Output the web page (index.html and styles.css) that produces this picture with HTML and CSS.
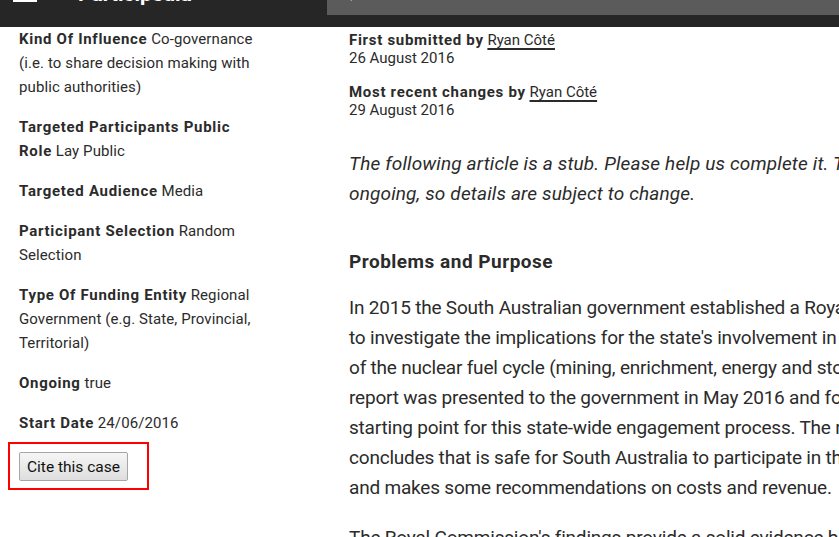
FILE: index.html
```html
<!DOCTYPE html>
<html lang="en">
<head>
<meta charset="utf-8">
<title>Participedia</title>
<link rel="stylesheet" href="styles.css">
</head>
<body>
<header class="topbar">
  <svg class="burger" width="24" height="20" viewBox="0 0 24 20"><rect x="0" y="0" width="24" height="2" fill="#fff"/><rect x="0" y="8" width="24" height="2" fill="#fff"/><rect x="0" y="16" width="24" height="2" fill="#fff"/></svg>
  <span class="brand">Participedia</span>
  <div class="search">
    <svg class="search-icon" width="16" height="16" viewBox="0 0 16 16"><circle cx="6.5" cy="6.5" r="5" fill="none" stroke="#fff" stroke-width="2"/><line x1="10.2" y1="10.2" x2="14" y2="14" stroke="#fff" stroke-width="2.2"/></svg>
  </div>
</header>
<main class="page">
  <aside class="facts">
    <p class="fact"><b>Kind Of Influence</b> Co-governance<br>(i.e. to share decision making with<br>public authorities)</p>
    <p class="fact"><b>Targeted Participants Public<br>Role</b> Lay Public</p>
    <p class="fact"><b>Targeted Audience</b> Media</p>
    <p class="fact"><b>Participant Selection</b> Random<br>Selection</p>
    <p class="fact"><b>Type Of Funding Entity</b> Regional<br>Government (e.g. State, Provincial,<br>Territorial)</p>
    <p class="fact"><b>Ongoing</b> true</p>
    <p class="fact"><b>Start Date</b> 24/06/2016</p>
    <div class="cite-box"><button class="cite-btn" type="button">Cite this case</button></div>
  </aside>
  <article class="article">
    <div class="meta">
      <p><b>First submitted by</b> <a href="#">Ryan Côté</a><br>26 August 2016</p>
      <p><b>Most recent changes by</b> <a href="#">Ryan Côté</a><br>29 August 2016</p>
    </div>
    <p class="stub">The following article is a stub. Please help us complete it. This process is<br>ongoing, so details are subject to change.</p>
    <h2 class="section-title">Problems and Purpose</h2>
    <p class="body">In 2015 the South Australian government established a Royal Commission<br>to investigate the implications for the state's involvement in four areas<br>of the nuclear fuel cycle (mining, enrichment, energy and storage). The final<br>report was presented to the government in May 2016 and forms the<br>starting point for this state-wide engagement process. The report<br>concludes that is safe for South Australia to participate in the storage<br>and makes some recommendations on costs and revenue.</p>
    <p class="body">The Royal Commission's findings provide a solid evidence base for the</p>
  </article>
</main>
</body>
</html>
```

FILE: styles.css
```css
html, body {
  margin: 0;
  padding: 0;
  background: #fff;
  overflow: hidden;
}
body {
  font-family: Roboto, "Liberation Sans", sans-serif;
  color: #2b2b2b;
  width: 839px;
  height: 537px;
}
.topbar {
  height: 27px;
  background: #262626;
  display: flex;
  align-items: flex-start;
  overflow: hidden;
}
.burger {
  margin: -16px 0 0 13px;
  flex: none;
}
.brand {
  margin: -16px 0 0 41px;
  font-size: 21px;
  line-height: 21px;
  font-weight: 700;
  color: #fff;
  flex: none;
}
.search {
  margin-left: auto;
  width: 512px;
  height: 15px;
  background: #5b5b5b;
  position: relative;
  flex: none;
}
.search-icon {
  position: absolute;
  left: 11px;
  top: -14px;
}
.page {
  display: flex;
  align-items: flex-start;
  padding-left: 19px;
}
.facts {
  width: 262px;
  flex: none;
  font-size: 15px;
  line-height: 24px;
  letter-spacing: 0.1px;
}
.fact {
  margin: 0 0 16px;
  white-space: nowrap;
}
.fact b {
  font-weight: 700;
  letter-spacing: 0.7px;
}
.cite-box {
  display: inline-block;
  margin: -9px 0 0 -11px;
  padding: 8px 19px 7px 9px;
  border: 2px solid #ff0000;
}
.cite-btn {
  display: block;
  width: 109px;
  height: 29px;
  font-family: inherit;
  font-size: 15.5px;
  color: #111;
  background: linear-gradient(#f6f6f6, #dedede);
  border: 1px solid #a6a6a6;
  border-radius: 2px;
  padding: 0;
}
.article {
  margin-left: 68px;
  width: 600px;
  flex: none;
  padding-top: 4px;
}
.meta p {
  margin: 0 0 16px;
  font-size: 15px;
  line-height: 18px;
  white-space: nowrap;
}
.meta b {
  font-weight: 700;
  letter-spacing: 0.7px;
}
.meta a {
  color: inherit;
  text-decoration: underline;
  text-decoration-thickness: 2px;
  text-underline-offset: 3px;
}
.stub {
  margin: 30px 0 0;
  font-size: 19px;
  line-height: 30px;
  font-style: italic;
  letter-spacing: 0.15px;
  white-space: nowrap;
}
.section-title {
  margin: 40px 0 0;
  font-size: 19px;
  line-height: 26px;
  font-weight: 700;
  letter-spacing: 0.5px;
}
.body {
  margin: 18px 0 0;
  font-size: 19px;
  line-height: 30px;
  letter-spacing: -0.2px;
  white-space: nowrap;
}
.body + .body {
  margin-top: 20px;
}
```
